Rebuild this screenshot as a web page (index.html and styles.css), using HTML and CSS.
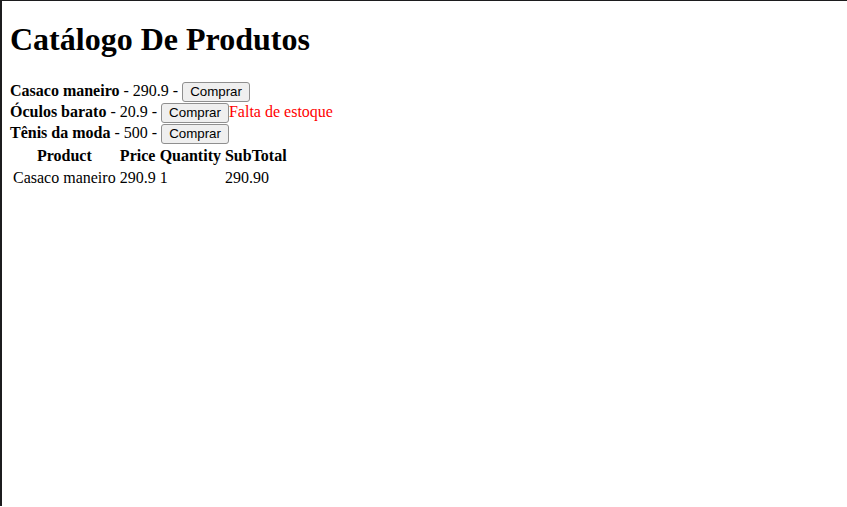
FILE: index.html
```html
<!DOCTYPE html>
<html>
<head>
<meta charset="utf-8">
<link rel="stylesheet" href="styles.css">
</head>
<body>
<div class="frame">
  <h1 class="title">Catálogo De Produtos</h1>
  <div class="item"><strong>Casaco maneiro</strong> - 290.9 - <button class="buy">Comprar</button></div>
  <div class="item"><strong>Óculos barato</strong> - 20.9 - <button class="buy">Comprar</button><span class="warn">Falta de estoque</span></div>
  <div class="item"><strong>Tênis da moda</strong> - 500 - <button class="buy">Comprar</button></div>
  <table class="cart">
    <thead>
      <tr><th>Product</th><th>Price</th><th>Quantity</th><th>SubTotal</th></tr>
    </thead>
    <tbody>
      <tr><td>Casaco maneiro</td><td>290.9</td><td>1</td><td>290.90</td></tr>
    </tbody>
  </table>
</div>
</body>
</html>
```
FILE: styles.css
```css
html, body {
  margin: 0;
  padding: 0;
  background: #fff;
}
body {
  font-family: "Liberation Serif", "Times New Roman", serif;
  font-size: 16px;
  color: #000;
}
.frame {
  border-top: 1px solid #1c1c1e;
  border-left: 2px solid #1c1c1e;
  min-height: 506px;
  padding: 0 8px;
  box-sizing: border-box;
  overflow: hidden;
}
.title {
  font-size: 32px;
  font-weight: bold;
  margin: 20px 0 22px;
}
.item {
  line-height: 21px;
  height: 21px;
}
.buy {
  font-family: "Liberation Sans", Arial, sans-serif;
  font-size: 13.33px;
  padding: 1px 7px;
  height: 20px;
  line-height: 16px;
  border: 1px solid #8f8f8f;
  border-radius: 3px;
  background: #efefef;
  color: #000;
  vertical-align: baseline;
  margin: 0;
}
.warn {
  color: #ff0000;
}
.cart {
  border-spacing: 2px;
}
.cart th, .cart td {
  padding: 1px;
  line-height: 19px;
}
.cart td {
  line-height: 18px;
  text-align: left;
}
.cart th {
  font-weight: bold;
  text-align: center;
}
```
